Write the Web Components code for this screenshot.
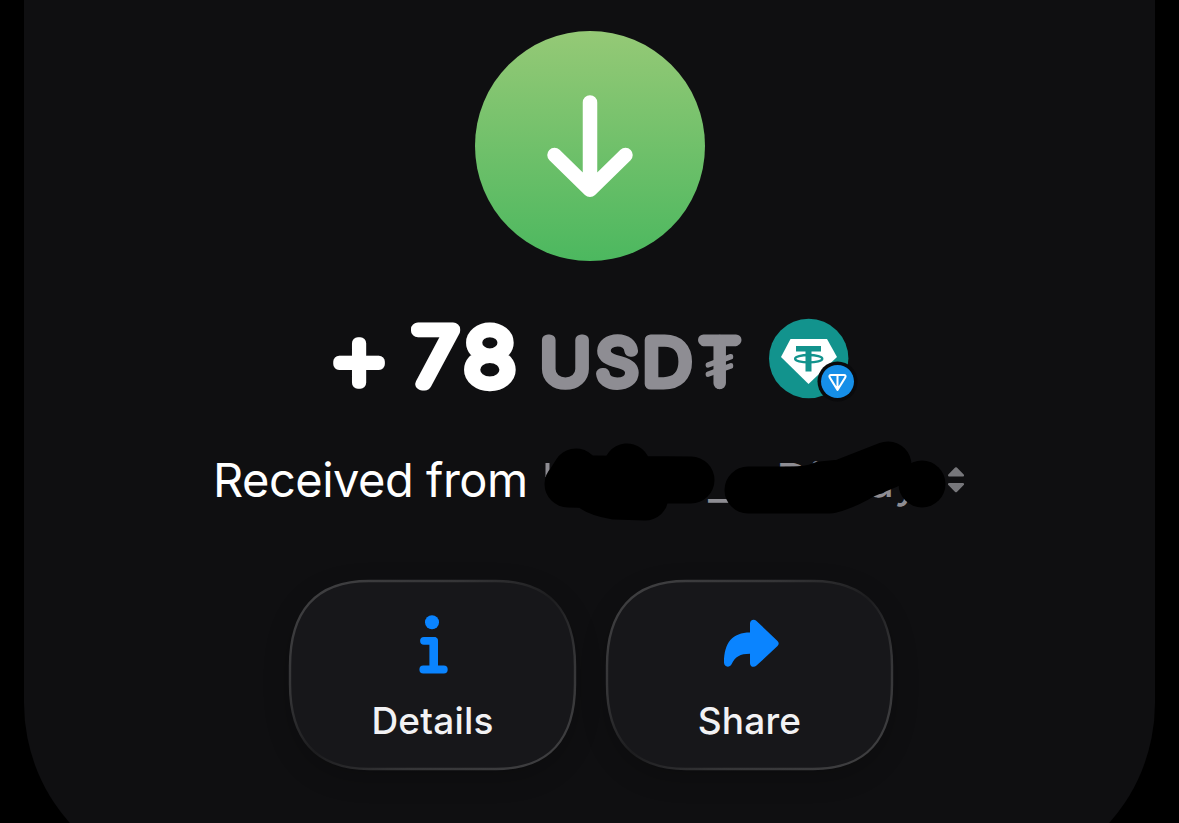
<!DOCTYPE html>
<html lang="en">
<head>
<meta charset="utf-8">
<title>Transaction</title>
<style>
body
{
    margin: 0;
    height: 823px;
    overflow: hidden;
    background: #000;
    font-family: Inter, "Liberation Sans", sans-serif;
    color: #fff;
}
</style>
</head>
<body>
<transaction-sheet>
    <direction-badge></direction-badge>
    <token-amount value="78" currency="USD"><token-icon></token-icon></token-amount>
    <sender-line>Received from</sender-line>
    <action-row>
        <action-button>
            <svg slot="icon" width="60" height="66" viewBox="403 612 60 66" fill="none" stroke="#0a84ff" stroke-linecap="round" stroke-linejoin="round">
                <circle cx="432" cy="622.3" r="7" fill="#0a84ff" stroke="none"/>
                <path d="M424 640.800h10M423.3 669.5h20.5" stroke-width="7.800"/>
                <path d="M433.7 641.3v27" stroke-width="8.6"/>
            </svg>
            Details
        </action-button>
        <action-button>
            <svg slot="icon" width="60" height="66" viewBox="720 612 60 66" fill="#0a84ff">
                <path d="M750 623.5c0-3.8 4-4.8 6.5-2.6l21 20.2c1.6 1.5 1.6 3.5 0 5l-21 19.5c-2.6 2.4-6.5 1.2-6.5-2.400v-9.400c-10 0-14.800 3-18.300 10.200-2.200 4.400-7.700 3.200-7.700-1.400 0-20 8.500-30 26-30z"/>
            </svg>
            Share
        </action-button>
    </action-row>
</transaction-sheet>

<script>
function createTemplate(html) {
    const template = document.createElement('template');
    template.innerHTML = html;
    return template;
}

function attach(element, template) {
    element.attachShadow({ mode: 'open' });
    element.shadowRoot.appendChild(template.content.cloneNode(true));
}

// the sheet's lower edge lies below the window, so only its corners start to curve
const sheetTemplate = createTemplate(`
<style>
:host
{
    display: flex;
    flex-direction: column;
    align-items: center;
    box-sizing: border-box;
    width: 1131px;
    height: 823px;
    margin: 0 24px;
    padding-top: 31px;
    clip-path: inset(0 0 -60px 0 round 0 0 180px 180px);
    background: #0f0f11;
}
</style>
<slot></slot>
`);

class TransactionSheet extends HTMLElement {
    constructor() {
        super();
        attach(this, sheetTemplate);
    }
}

const directionTemplate = createTemplate(`
<style>
:host
{
    display: flex;
    align-items: center;
    justify-content: center;
    width: 230px;
    height: 230px;
    border-radius: 50%;
    background: linear-gradient(#95c976, #4cb85f);
}
</style>
<svg width="100" height="110" viewBox="540 91 100 110" fill="none" stroke="#fff" stroke-width="14.500" stroke-linecap="round" stroke-linejoin="round">
    <path d="M590 102.500v87M554.500 155l35.500 34.800 35.500-34.800"/>
</svg>
`);

class DirectionBadge extends HTMLElement {
    constructor() {
        super();
        attach(this, directionTemplate);
    }
}

// hairline glyphs with a wide round outline give the digits their soft ends
const amountTemplate = createTemplate(`
<style>
:host
{
    display: flex;
    height: 80px;
    margin-top: 58px;
}
svg
{
    overflow: visible;
}
text
{
    stroke-linejoin: round;
    font-weight: 100;
}
.main
{
    fill: #fff;
    stroke: #fff;
    stroke-width: 13px;
    font-size: 75px;
}
.sign
{
    font-size: 96px;
    stroke-width: 12px;
}
.currency
{
    fill: #8e8d93;
    stroke: #8e8d93;
    stroke-width: 11px;
    font-size: 60.5px;
}
.tugrik
{
    stroke-width: 4px;
    font-size: 60px;
}
.bar
{
    fill: none;
    stroke: #8e8d93;
    stroke-linecap: round;
}
</style>
<svg width="438" height="80" viewBox="331 319 438 80">
    <text class="main sign" x="328.600" y="389.500">+</text>
    <text class="main value" transform="translate(413 384) scale(1.1 1)" dx="0 7.500"></text>
    <text class="currency name" transform="translate(541.5 384) scale(1.1 1)" dx="0 7 5"></text>
    <text class="currency tugrik" x="699" y="387" textLength="41" lengthAdjust="spacingAndGlyphs">₮</text>
    <path class="bar" d="M703.500 340h32.500" stroke-width="11"/>
    <path class="bar" d="M719.700 341v42" stroke-width="12.500"/>
</svg>
<slot></slot>
`);

class TokenAmount extends HTMLElement {
    constructor() {
        super();
        attach(this, amountTemplate);
        this.shadowRoot.querySelector('.value').textContent = this.getAttribute('value');
        this.shadowRoot.querySelector('.name').textContent = this.getAttribute('currency');
    }
}

const tokenTemplate = createTemplate(`
<style>
:host
{
    display: block;
    width: 79px;
    height: 80px;
}
svg
{
    overflow: visible;
}
</style>
<svg width="79" height="80" viewBox="769 319 79 80">
    <circle cx="808.700" cy="358.500" r="39.700" fill="#12938d"/>
    <path d="M790.500 339h36.500l10 18-28.500 27-27.500-27z" fill="#fff"/>
    <path d="M796 346h25v5.500h-9.500v20h-6v-20h-9.500z" fill="#12938d"/>
    <ellipse cx="808.700" cy="358.700" rx="13.600" ry="3.700" fill="none" stroke="#12938d" stroke-width="2.300"/>
    <circle cx="837.500" cy="381.500" r="20" fill="#0a0a0c"/>
    <circle cx="837.500" cy="381.500" r="16.500" fill="#168fe8"/>
    <path d="M831 375h13c1.500 0 2 1.200 1.300 2.400l-7.800 12.600-7.800-12.600c-.700-1.200-.200-2.400 1.300-2.400zM837.500 375v14" fill="none" stroke="#fff" stroke-width="2" stroke-linejoin="round"/>
</svg>
`);

class TokenIcon extends HTMLElement {
    constructor() {
        super();
        attach(this, tokenTemplate);
    }
}

const senderTemplate = createTemplate(`
<style>
:host
{
    display: flex;
    height: 80px;
    margin-top: 42px;
    font-size: 47px;
    line-height: 78px;
    white-space: nowrap;
}
.label
{
    width: 327px;
    margin-left: -2px;
    letter-spacing: -0.5px;
}
text
{
    fill: #8e8d93;
}
.brush
{
    fill: none;
    stroke: #000;
    stroke-width: 47px;
    stroke-linecap: round;
    stroke-linejoin: round;
}
</style>
<span class="label"><slot></slot></span>
<svg width="424" height="80" viewBox="540 441 424 80">
    <path d="M545.500 463h4v14h-4z" fill="#8e8d93"/>
    <text x="708" y="499">_</text>
    <text x="776" y="497">Di</text>
    <text x="868" y="497">ay</text>
    <path class="brush" d="M576 472l-7 11 25-4 97 1M568 484q12 0 20 1 8 8 27 11l30 1M627 467l-6 20h25"/>
    <path class="brush" d="M748 490h82q16-4 34-15l24-10M790 490q20 0 32-5l20-2 46-18"/>
    <circle cx="922" cy="484" r="23.500"/>
    <path d="M956 468.500l6.800 6.800h-13.600zM956 491l6.800-6.800h-13.600z" fill="#77777b" stroke="#77777b" stroke-width="2.500" stroke-linejoin="round"/>
</svg>
`);

class SenderLine extends HTMLElement {
    constructor() {
        super();
        attach(this, senderTemplate);
    }
}

const rowTemplate = createTemplate(`
<style>
:host
{
    display: flex;
    gap: 30px;
    margin-top: 59px;
    padding-left: 3px;
}
</style>
<slot></slot>
`);

class ActionRow extends HTMLElement {
    constructor() {
        super();
        attach(this, rowTemplate);
    }
}

const buttonTemplate = createTemplate(`
<style>
:host
{
    position: relative;
    display: flex;
    flex-direction: column;
    align-items: center;
    box-sizing: border-box;
    width: 287px;
    height: 190px;
    padding-top: 32px;
    font-size: 37px;
    font-weight: 500;
    letter-spacing: 0.2px;
    color: #f2f2f4;
}
.surface
{
    position: absolute;
    top: 0;
    left: 0;
    overflow: visible;
    filter: drop-shadow(0 8px 12px rgba(0, 0, 0, 0.2));
}
.icon, .label
{
    position: relative;
}
.icon
{
    height: 66px;
}
.label
{
    margin-top: 20px;
    line-height: 46px;
}
</style>
<svg class="surface" width="287" height="190" viewBox="0 0 287 190">
    <defs>
        <linearGradient id="rim" x1="0" y1="0" x2="1" y2="1">
            <stop offset="0" stop-color="#414143"/>
            <stop offset="0.300" stop-color="#353537"/>
            <stop offset="0.500" stop-color="#1d1d1f"/>
            <stop offset="0.700" stop-color="#353537"/>
            <stop offset="1" stop-color="#414143"/>
        </linearGradient>
    </defs>
    <path d="M1 86C1 32 26 1 80 1H207C261 1 286 32 286 86V104C286 158 261 189 207 189H80C26 189 1 158 1 104Z" fill="#17171a" stroke="url(#rim)" stroke-width="2.400"/>
</svg>
<div class="icon"><slot name="icon"></slot></div>
<div class="label"><slot></slot></div>
`);

class ActionButton extends HTMLElement {
    constructor() {
        super();
        attach(this, buttonTemplate);
    }
}

window.customElements.define('transaction-sheet', TransactionSheet);
window.customElements.define('direction-badge', DirectionBadge);
window.customElements.define('token-amount', TokenAmount);
window.customElements.define('token-icon', TokenIcon);
window.customElements.define('sender-line', SenderLine);
window.customElements.define('action-row', ActionRow);
window.customElements.define('action-button', ActionButton);
</script>
</body>
</html>
